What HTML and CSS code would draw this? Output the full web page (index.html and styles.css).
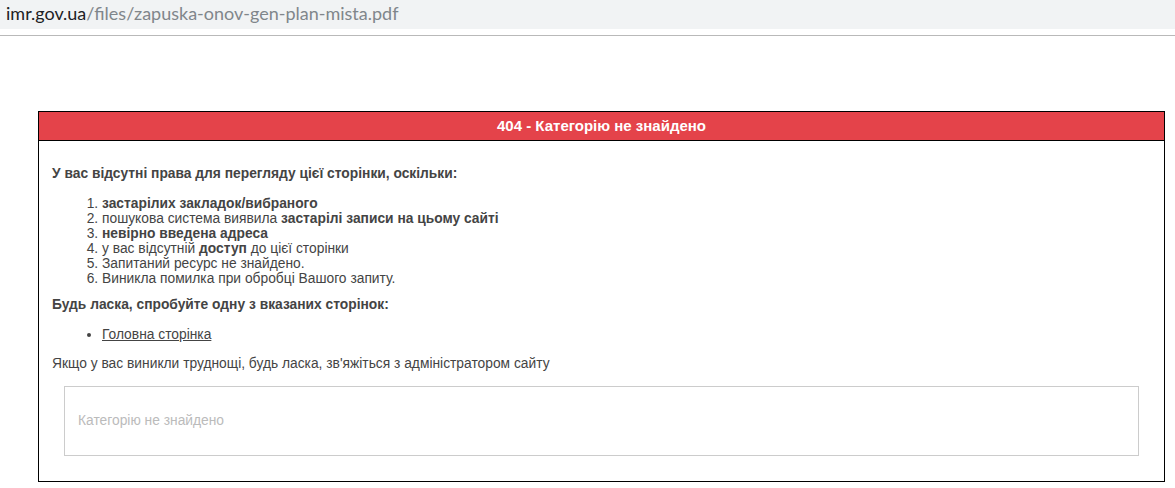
FILE: index.html
```html
<!DOCTYPE html>
<html lang="uk">
<head>
<meta charset="utf-8">
<title>404 - Категорію не знайдено</title>
<link rel="stylesheet" href="styles.css">
</head>
<body>
<div class="addressbar"><span class="host">imr.gov.ua</span><span class="path">/files/zapuska-onov-gen-plan-mista.pdf</span></div>
<div class="toolbar-line"></div>
<div class="page">
  <div class="errorbox">
    <div class="errorhead">404 - Категорію не знайдено</div>
    <div class="errorbody">
      <p class="lead"><strong>У вас відсутні права для перегляду цієї сторінки, оскільки:</strong></p>
      <ol class="reasons">
        <li><strong>застарілих закладок/вибраного</strong></li>
        <li>пошукова система виявила <strong>застарілі записи на цьому сайті</strong></li>
        <li><strong>невірно введена адреса</strong></li>
        <li>у вас відсутній <strong>доступ</strong> до цієї сторінки</li>
        <li>Запитаний ресурс не знайдено.</li>
        <li>Виникла помилка при обробці Вашого запиту.</li>
      </ol>
      <p class="lead lead-second"><strong>Будь ласка, спробуйте одну з вказаних сторінок:</strong></p>
      <ul class="links">
        <li><a href="#" class="homelink">Головна сторінка</a></li>
      </ul>
      <p class="contact">Якщо у вас виникли труднощі, будь ласка, зв'яжіться з адміністратором сайту</p>
      <div class="errmsg">Категорію не знайдено</div>
    </div>
  </div>
</div>
</body>
</html>
```
FILE: styles.css
```css
html, body {
  margin: 0;
  padding: 0;
  background: #ffffff;
}
.addressbar {
  height: 29px;
  background: #f1f3f4;
  font-family: Lato, "Noto Sans", sans-serif;
  font-size: 18px;
  line-height: 26px;
  padding-left: 6px;
  white-space: nowrap;
  overflow: hidden;
}
.host { color: #202124; }
.path { color: #80868b; }
.toolbar-line {
  margin-top: 6px;
  height: 1px;
  background: #b9b9b9;
}
.page {
  padding: 75px 10px 0 38px;
}
.errorbox {
  border: 1px solid #000;
  font-family: "Liberation Sans", Arial, sans-serif;
  font-size: 13.8px;
  color: #444;
}
.errorhead {
  background: #e4434a;
  color: #fff;
  font-weight: bold;
  font-size: 15px;
  text-align: center;
  height: 28px;
  line-height: 28px;
  border-bottom: 1px solid #000;
}
.errorbody {
  padding: 11px 13px 25px 13px;
}
.errorbody > * {
  margin-bottom: 0;
}
.lead {
  margin-top: 14px;
  line-height: 16px;
}
.lead-second {
  margin-top: 11px;
}
.reasons {
  margin-top: 14px;
  padding-left: 50px;
  line-height: 15px;
}
.links {
  margin-top: 14px;
  padding-left: 50px;
  line-height: 16px;
}
.homelink {
  color: #444;
  text-decoration: underline;
}
.contact {
  margin-top: 13px;
  line-height: 16px;
}
.errmsg {
  margin: 14px 12px 0;
  border: 1px solid #cccccc;
  height: 68px;
  line-height: 68px;
  padding-left: 13px;
  color: #bbbbbb;
}
```
